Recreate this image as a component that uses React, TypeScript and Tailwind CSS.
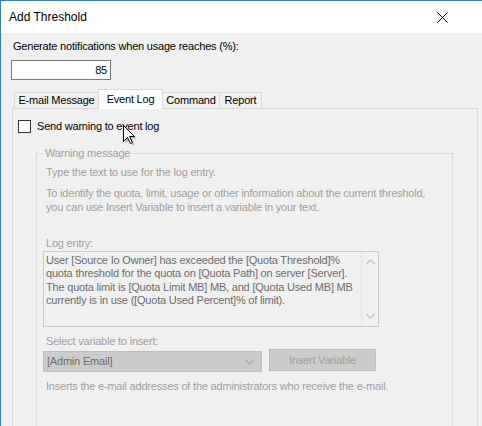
import React from "react";

const tabBase =
  "-ml-px flex items-center justify-center border border-b-0 border-[#d9d9d9] bg-[#f0f0f0] h-[16px] whitespace-nowrap";

export default function App() {
  return (
    <div className="relative w-[482px] h-[426px] overflow-hidden border-l border-t border-[#2b7cd3] bg-[#f0f0f0] font-['Liberation_Sans',Arial,sans-serif] text-[11px] tracking-[-0.2px] text-black">
      {/* Title bar */}
      <div className="flex h-[32px] items-center justify-between bg-white pl-[8px] pr-[34px]">
        <span className="text-[12px] tracking-normal">Add Threshold</span>
        <svg width="11" height="11" viewBox="0 0 11 11" className="block">
          <path d="M0.5 0.5 L10.5 10.5 M10.5 0.5 L0.5 10.5" stroke="#000" strokeWidth="1" />
        </svg>
      </div>

      {/* Body */}
      <div className="pt-[7px]">
        <div className="ml-[12px] h-[13px] leading-[13px]">
          Generate notifications when usage reaches (%):
        </div>
        <div className="ml-[10px] mt-[7px] h-[20px] w-[100px] border border-[#7a7a7a] bg-white pr-[3px] text-right leading-[18px]">
          85
        </div>

        {/* Tabs */}
        <div className="ml-[13px] mt-[9px] flex h-[19px] items-end">
          <div className={`${tabBase} ml-0 w-[85px]`}>E-mail Message</div>
          <div className="relative z-10 -mb-px -ml-px flex h-[20px] w-[65px] items-center justify-center border border-b-0 border-[#d9d9d9] bg-white whitespace-nowrap">
            Event Log
          </div>
          <div className={`${tabBase} w-[58px]`}>Command</div>
          <div className={`${tabBase} w-[43px]`}>Report</div>
        </div>

        {/* Tab panel */}
        <div className="ml-[11px] h-[330px] w-[466px] border border-[#d9d9d9] bg-[#f0f0f0]">
          <div className="ml-[5px] mt-[11px] flex h-[13px] items-center">
            <div className="h-[13px] w-[13px] border border-[#333333] bg-white" />
            <span className="ml-[6px] leading-[13px]">Send warning to event log</span>
          </div>

          <fieldset className="ml-[23px] mt-[14px] h-[300px] w-[417px] border border-[#dcdcdc] pl-[9px] text-[#a0a0a0]">
            <legend className="-ml-[2px] px-[1px] leading-[13px]">Warning message</legend>

            <div className="mt-[6px] leading-[13px]">Type the text to use for the log entry.</div>
            <div className="mt-[7px] leading-[14px] whitespace-nowrap">
              <div>To identify the quota, limit, usage or other information about the current threshold,</div>
              <div>you can use Insert Variable to insert a variable in your text.</div>
            </div>

            <div className="mt-[23px] leading-[13px]">Log entry:</div>
            <div className="-ml-[3px] mt-[1px] flex h-[76px] w-[336px] border border-[#cccccc] bg-[#f0f0f0]">
              <div className="flex-1 pl-[2px] pt-[2px] leading-[13.4px] text-[#6d6d6d] whitespace-nowrap">
                <div>User [Source Io Owner] has exceeded the [Quota Threshold]%</div>
                <div>quota threshold for the quota on [Quota Path] on server [Server].</div>
                <div>The quota limit is [Quota Limit MB] MB, and [Quota Used MB] MB</div>
                <div>currently is in use ([Quota Used Percent]% of limit).</div>
              </div>
              <div className="flex w-[17px] flex-col items-center justify-between border-l border-[#e3e3e3] py-[7px]">
                <svg width="9" height="6" viewBox="0 0 9 6">
                  <path d="M0.5 5 L4.5 1 L8.5 5" fill="none" stroke="#c0c0c0" strokeWidth="1.2" />
                </svg>
                <svg width="9" height="6" viewBox="0 0 9 6">
                  <path d="M0.5 1 L4.5 5 L8.5 1" fill="none" stroke="#c0c0c0" strokeWidth="1.2" />
                </svg>
              </div>
            </div>

            <div className="mt-[8px] leading-[13px]">Select variable to insert:</div>
            <div className="-ml-[3px] mt-[1px] flex items-start">
              <div className="mt-[2px] flex h-[21px] w-[219px] items-center justify-between border border-[#bfbfbf] bg-[#cccccc] pl-[3px] pr-[7px]">
                <span className="text-[#6d6d6d]">[Admin Email]</span>
                <svg width="9" height="6" viewBox="0 0 9 6">
                  <path d="M0.5 1 L4.5 5 L8.5 1" fill="none" stroke="#a8a8a8" strokeWidth="1.1" />
                </svg>
              </div>
              <div className="ml-[7px] flex h-[22px] w-[107px] items-center justify-center border border-[#bfbfbf] bg-[#cccccc] text-[#a0a0a0]">
                Insert Variable
              </div>
            </div>
            <div className="mt-[8px] leading-[13px]">
              Inserts the e-mail addresses of the administrators who receive the e-mail.
            </div>
          </fieldset>
        </div>
      </div>

      {/* Mouse cursor */}
      <svg
        className="absolute left-[122px] top-[124px]"
        width="15"
        height="22"
        viewBox="0 0 15 22"
      >
        <path d="M2.5 2.5 L2.5 18.5 L6.5 14.5 L9.5 20.5 L11.5 19.5 L8.5 13.5 L13.5 13.5 Z" fill="#000" opacity="0.25" />
        <path d="M0.5 0.5 L0.5 16.5 L4.5 12.5 L7.5 18.5 L9.5 17.5 L6.5 11.5 L11.5 11.5 Z" fill="#fff" stroke="#000" strokeWidth="1" strokeLinejoin="miter" />
      </svg>
    </div>
  );
}
